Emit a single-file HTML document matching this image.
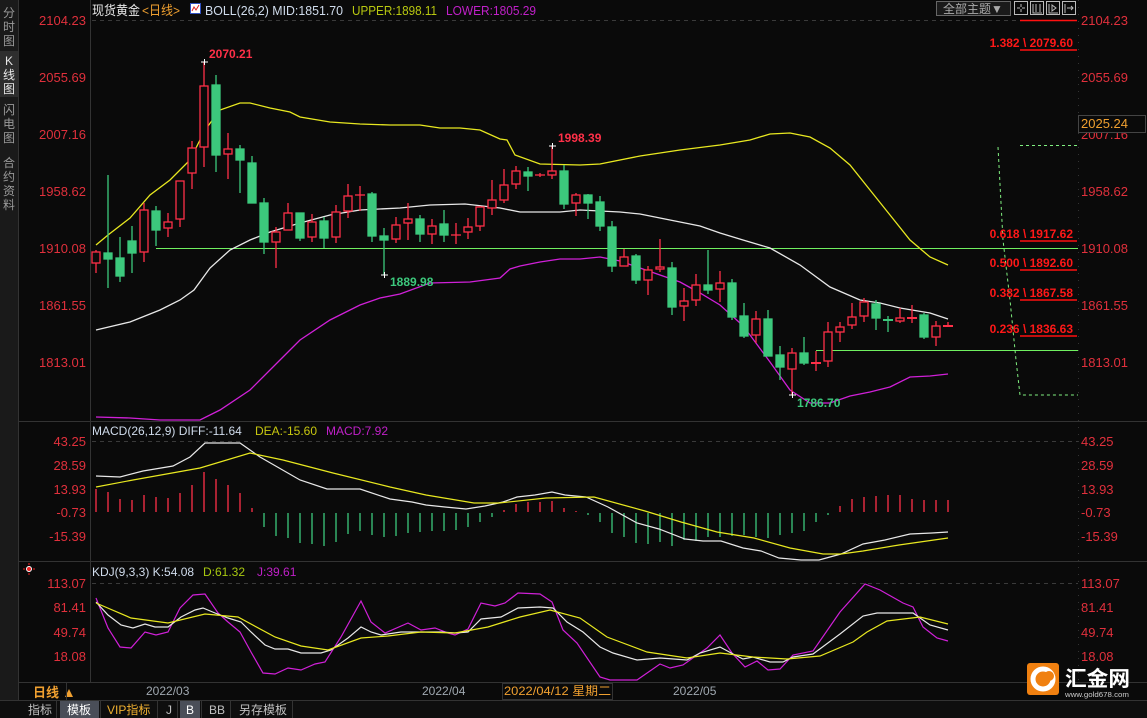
<!DOCTYPE html>
<html><head><meta charset="utf-8"><style>
*{margin:0;padding:0}
body{width:1147px;height:718px;background:#0a0a0a;overflow:hidden;font-family:"Liberation Sans","Noto Sans CJK SC",sans-serif}
svg{position:absolute;left:0;top:0}
</style></head><body>
<svg width="1147" height="718" viewBox="0 0 1147 718" xmlns="http://www.w3.org/2000/svg" font-family="Liberation Sans, Noto Sans CJK SC, sans-serif">
<rect width="1147" height="718" fill="#0a0a0a"/>
<rect x="0" y="0" width="18" height="700" fill="#1a1a1a"/>
<rect x="0" y="51" width="18" height="46" fill="#2e2e2e"/>
<line x1="18.5" y1="0" x2="18.5" y2="700" stroke="#333"/>
<g font-size="12" fill="#9a9a9a" text-anchor="middle">
<text x="9" y="17">分</text><text x="9" y="31">时</text><text x="9" y="45">图</text>
<text x="9" y="65" fill="#e8e8e8">K</text><text x="9" y="79" fill="#e8e8e8">线</text><text x="9" y="93" fill="#e8e8e8">图</text>
<text x="9" y="114">闪</text><text x="9" y="128">电</text><text x="9" y="142">图</text>
<text x="9" y="167">合</text><text x="9" y="181">约</text><text x="9" y="195">资</text><text x="9" y="209">料</text>
</g>
<g stroke="#333" stroke-width="1">
<line x1="90.5" y1="0" x2="90.5" y2="682"/>
<line x1="19" y1="421.5" x2="1147" y2="421.5"/>
<line x1="19" y1="561.5" x2="1147" y2="561.5"/>
<line x1="19" y1="682.5" x2="1147" y2="682.5"/>
<line x1="0" y1="700.5" x2="1147" y2="700.5"/>
<line x1="1078.5" y1="0" x2="1078.5" y2="682" stroke-dasharray="1,6"/>
</g>
<g stroke="#3a3a3a" stroke-dasharray="4,4">
<line x1="92" y1="20.5" x2="1020" y2="20.5"/>
<line x1="92" y1="441.5" x2="1078" y2="441.5"/>
<line x1="92" y1="583.5" x2="1078" y2="583.5"/>
</g>
<g font-size="13" fill="#e0303c">
<g text-anchor="end">
<text x="86" y="25">2104.23</text><text x="86" y="82">2055.69</text><text x="86" y="139">2007.16</text><text x="86" y="196">1958.62</text><text x="86" y="253">1910.08</text><text x="86" y="310">1861.55</text><text x="86" y="367">1813.01</text>
<text x="86" y="446">43.25</text><text x="86" y="470">28.59</text><text x="86" y="494">13.93</text><text x="86" y="517">-0.73</text><text x="86" y="541">-15.39</text>
<text x="86" y="588">113.07</text><text x="86" y="612">81.41</text><text x="86" y="637">49.74</text><text x="86" y="661">18.08</text>
</g>
<text x="1081" y="25">2104.23</text><text x="1081" y="82">2055.69</text><text x="1081" y="139">2007.16</text><text x="1081" y="196">1958.62</text><text x="1081" y="253">1910.08</text><text x="1081" y="310">1861.55</text><text x="1081" y="367">1813.01</text>
<text x="1081" y="446">43.25</text><text x="1081" y="470">28.59</text><text x="1081" y="494">13.93</text><text x="1081" y="517">-0.73</text><text x="1081" y="541">-15.39</text>
<text x="1081" y="588">113.07</text><text x="1081" y="612">81.41</text><text x="1081" y="637">49.74</text><text x="1081" y="661">18.08</text>
</g>
<rect x="1078.5" y="115.5" width="67" height="17" fill="#0a0a0a" stroke="#444"/>
<text x="1081" y="128" font-size="13" fill="#f0a030">2025.24</text>
<g font-size="13">
<text x="92" y="15" fill="#e8e8e8" textLength="48" lengthAdjust="spacingAndGlyphs">现货黄金</text>
<text x="142" y="15" fill="#f0a030" textLength="38" lengthAdjust="spacingAndGlyphs">&lt;日线&gt;</text>
<rect x="190.5" y="3.5" width="10" height="10" fill="#fff" stroke="#3050c0"/>
<polyline points="192,11 194,7 196,10 199,5" fill="none" stroke="#e02020"/>
<text x="205" y="15" fill="#d0dcec" textLength="138" lengthAdjust="spacingAndGlyphs">BOLL(26,2) MID:1851.70</text>
<text x="352" y="15" fill="#b8c810" textLength="85" lengthAdjust="spacingAndGlyphs">UPPER:1898.11</text>
<text x="446" y="15" fill="#c020c8" textLength="90" lengthAdjust="spacingAndGlyphs">LOWER:1805.29</text>
</g>
<g font-size="12">
<text x="92" y="435" fill="#d0dcec">MACD(26,12,9) DIFF:-11.64</text>
<text x="255" y="435" fill="#c8c810">DEA:-15.60</text>
<text x="326" y="435" fill="#c020c8">MACD:7.92</text>
<text x="92" y="576" fill="#d0dcec">KDJ(9,3,3) K:54.08</text>
<text x="203" y="576" fill="#a8c810">D:61.32</text>
<text x="257" y="576" fill="#c020c8">J:39.61</text>
</g>
<circle cx="29" cy="569" r="2.5" fill="#f02020" stroke="#fff"/>
<g stroke="#f02020"><line x1="23" y1="569" x2="25" y2="569"/><line x1="33" y1="569" x2="35" y2="569"/><line x1="29" y1="563" x2="29" y2="565"/><line x1="29" y1="573" x2="29" y2="575"/></g>
<rect x="936.5" y="1.5" width="74" height="14" fill="#1a1a1a" stroke="#666"/>
<text x="943" y="13" font-size="12" fill="#aaa">全部主题▼</text>
<g fill="none" stroke="#bbb">
<rect x="1014.5" y="1.5" width="13" height="13"/><rect x="1030.5" y="1.5" width="13" height="13"/><rect x="1046.5" y="1.5" width="13" height="13"/><rect x="1062.5" y="1.5" width="13" height="13"/>
<path d="M1021 4v3M1021 9v3M1017 8h3M1022 8h3M1033 4v9h9M1036 4v8M1040 4v8M1049 4v9h9M1052 5l4 3-4 3zM1065 4v9M1067 8h6M1071 6l2 2-2 2"/>
</g>
<line x1="156" y1="248.5" x2="1078" y2="248.5" stroke="#70f060"/>
<line x1="816" y1="350.5" x2="1078" y2="350.5" stroke="#70f060"/>
<g stroke="#80f080" fill="none" stroke-dasharray="3,3">
<polyline points="998,147 1003,240 1010,300 1016,360 1020,395 1078,395"/>
<line x1="1020" y1="145.5" x2="1078" y2="145.5"/>
</g>
<g stroke="#ff1010" stroke-width="1.5">
<line x1="1020" y1="20.5" x2="1077" y2="20.5"/>
<line x1="1020" y1="50" x2="1077" y2="50"/>
<line x1="1020" y1="241" x2="1077" y2="241"/>
<line x1="1020" y1="270" x2="1077" y2="270"/>
<line x1="1020" y1="300" x2="1077" y2="300"/>
<line x1="1020" y1="336" x2="1077" y2="336"/>
</g>
<g font-size="12" font-weight="bold" fill="#ff1818" text-anchor="end">
<text x="1073" y="47">1.382 \ 2079.60</text>
<text x="1073" y="238">0.618 \ 1917.62</text>
<text x="1073" y="267">0.500 \ 1892.60</text>
<text x="1073" y="297">0.382 \ 1867.58</text>
<text x="1073" y="333">0.236 \ 1836.63</text>
</g>
<g fill="none" stroke-width="1.3">
<polyline stroke="#e8e820" points="96,245 108,235 130,218 150,195 170,180 190,160 205,130 220,110 240,103 250,103 270,108 290,112 300,117 330,122 360,124 390,125 420,125 440,128 460,128 480,130 500,139 507,140 515,155 540,164 580,165 600,164 640,156 680,150 720,145 750,140 770,134 790,133 810,137 830,148 850,165 870,190 890,215 910,240 930,257 948,265"/>
<polyline stroke="#e8e8e8" points="96,330 130,322 160,310 180,300 194,290 210,268 230,250 250,240 270,232 300,223 330,215 360,210 400,208 430,205 465,204 500,208 520,212 560,212 580,210 600,211 620,212 640,214 670,220 700,226 720,233 743,240 770,248 800,265 830,287 860,300 880,303 900,308 930,313 948,319"/>
<polyline stroke="#d020d8" points="96,417 130,418 160,420 200,420 220,410 250,390 280,360 300,340 330,320 360,305 380,298 400,294 430,283 470,282 500,278 510,269 520,266 540,262 560,259 580,259 600,257 620,261 640,268 660,275 680,282 700,293 720,305 740,323 750,335 770,362 790,390 810,403 830,403 850,396 870,392 890,387 910,377 930,376 948,374"/>
</g>
<g stroke-width="1.3">
<g stroke="#ff3048" fill="#0a0a0a">
<line x1="96" y1="250" x2="96" y2="273"/><rect x="92" y="252" width="8" height="11"/>
<line x1="144" y1="203" x2="144" y2="262"/><rect x="140" y="210" width="8" height="42"/>
<line x1="168" y1="213" x2="168" y2="237"/><rect x="164" y="222" width="8" height="6"/>
<line x1="180" y1="181" x2="180" y2="227"/><rect x="176" y="181" width="8" height="38"/>
<line x1="192" y1="141" x2="192" y2="189"/><rect x="188" y="148" width="8" height="25"/>
<line x1="204" y1="62" x2="204" y2="167"/><rect x="200" y="86" width="8" height="61"/>
<line x1="228" y1="133" x2="228" y2="179"/><rect x="224" y="149" width="8" height="5"/>
<line x1="276" y1="227" x2="276" y2="268"/><rect x="272" y="232" width="8" height="10"/>
<line x1="288" y1="203" x2="288" y2="230"/><rect x="284" y="213" width="8" height="17"/>
<line x1="312" y1="214" x2="312" y2="242"/><rect x="308" y="222" width="8" height="15"/>
<line x1="336" y1="205" x2="336" y2="243"/><rect x="332" y="212" width="8" height="25"/>
<line x1="348" y1="184" x2="348" y2="218"/><rect x="344" y="196" width="8" height="15"/>
<line x1="360" y1="186" x2="360" y2="211"/><line x1="355" y1="195" x2="365" y2="195"/>
<line x1="396" y1="217" x2="396" y2="243"/><rect x="392" y="225" width="8" height="14"/>
<line x1="408" y1="203" x2="408" y2="240"/><rect x="404" y="219" width="8" height="4"/>
<line x1="432" y1="219" x2="432" y2="244"/><rect x="428" y="226" width="8" height="8"/>
<line x1="456" y1="223" x2="456" y2="244"/><line x1="451" y1="235" x2="461" y2="235"/>
<line x1="468" y1="218" x2="468" y2="239"/><rect x="464" y="227" width="8" height="5"/>
<line x1="480" y1="206" x2="480" y2="231"/><rect x="476" y="207" width="8" height="19"/>
<line x1="492" y1="180" x2="492" y2="215"/><rect x="488" y="200" width="8" height="8"/>
<line x1="504" y1="169" x2="504" y2="203"/><rect x="500" y="185" width="8" height="15"/>
<line x1="516" y1="166" x2="516" y2="189"/><rect x="512" y="171" width="8" height="13"/>
<line x1="540" y1="173" x2="540" y2="177"/><line x1="535" y1="175" x2="545" y2="175"/>
<line x1="552" y1="146" x2="552" y2="179"/><rect x="548" y="171" width="8" height="4"/>
<line x1="576" y1="193" x2="576" y2="216"/><rect x="572" y="195" width="8" height="8"/>
<line x1="624" y1="249" x2="624" y2="266"/><rect x="620" y="257" width="8" height="9"/>
<line x1="648" y1="266" x2="648" y2="295"/><rect x="644" y="270" width="8" height="10"/>
<line x1="660" y1="239" x2="660" y2="272"/><rect x="656" y="267" width="8" height="2"/>
<line x1="684" y1="288" x2="684" y2="321"/><rect x="680" y="301" width="8" height="5"/>
<line x1="696" y1="274" x2="696" y2="306"/><rect x="692" y="285" width="8" height="15"/>
<line x1="720" y1="271" x2="720" y2="302"/><rect x="716" y="283" width="8" height="6"/>
<line x1="756" y1="311" x2="756" y2="343"/><rect x="752" y="319" width="8" height="16"/>
<line x1="792" y1="348" x2="792" y2="395"/><rect x="788" y="353" width="8" height="16"/>
<line x1="816" y1="351" x2="816" y2="371"/><line x1="811" y1="363" x2="821" y2="363" stroke-width="2"/>
<line x1="828" y1="322" x2="828" y2="367"/><rect x="824" y="332" width="8" height="29"/>
<line x1="840" y1="322" x2="840" y2="342"/><rect x="836" y="327" width="8" height="5"/>
<line x1="852" y1="303" x2="852" y2="329"/><rect x="848" y="317" width="8" height="8"/>
<line x1="864" y1="298" x2="864" y2="322"/><rect x="860" y="302" width="8" height="14"/>
<line x1="900" y1="308" x2="900" y2="323"/><rect x="896" y="318" width="8" height="3"/>
<line x1="912" y1="305" x2="912" y2="323"/><line x1="907" y1="318" x2="917" y2="318" stroke-width="2"/>
<line x1="936" y1="321" x2="936" y2="346"/><rect x="932" y="326" width="8" height="11"/>
<line x1="948" y1="322" x2="948" y2="326"/><line x1="943" y1="326" x2="953" y2="326" stroke-width="2"/>
</g>
<g stroke="#3cc87c" fill="#3cc87c">
<line x1="108" y1="175" x2="108" y2="288"/><rect x="104" y="253" width="8" height="6"/>
<line x1="120" y1="237" x2="120" y2="282"/><rect x="116" y="258" width="8" height="18"/>
<line x1="132" y1="226" x2="132" y2="273"/><rect x="128" y="241" width="8" height="12"/>
<line x1="156" y1="206" x2="156" y2="246"/><rect x="152" y="211" width="8" height="19"/>
<line x1="216" y1="75" x2="216" y2="172"/><rect x="212" y="85" width="8" height="70"/>
<line x1="240" y1="145" x2="240" y2="193"/><rect x="236" y="149" width="8" height="11"/>
<line x1="252" y1="156" x2="252" y2="203"/><rect x="248" y="163" width="8" height="40"/>
<line x1="264" y1="198" x2="264" y2="254"/><rect x="260" y="203" width="8" height="39"/>
<line x1="300" y1="213" x2="300" y2="241"/><rect x="296" y="213" width="8" height="25"/>
<line x1="324" y1="217" x2="324" y2="248"/><rect x="320" y="221" width="8" height="17"/>
<line x1="372" y1="192" x2="372" y2="242"/><rect x="368" y="194" width="8" height="42"/>
<line x1="384" y1="228" x2="384" y2="275"/><rect x="380" y="236" width="8" height="4"/>
<line x1="420" y1="215" x2="420" y2="242"/><rect x="416" y="219" width="8" height="15"/>
<line x1="444" y1="210" x2="444" y2="242"/><rect x="440" y="224" width="8" height="11"/>
<line x1="528" y1="167" x2="528" y2="191"/><rect x="524" y="172" width="8" height="4"/>
<line x1="564" y1="165" x2="564" y2="209"/><rect x="560" y="171" width="8" height="33"/>
<line x1="588" y1="194" x2="588" y2="219"/><rect x="584" y="195" width="8" height="8"/>
<line x1="600" y1="196" x2="600" y2="231"/><rect x="596" y="202" width="8" height="24"/>
<line x1="612" y1="221" x2="612" y2="272"/><rect x="608" y="227" width="8" height="39"/>
<line x1="636" y1="254" x2="636" y2="284"/><rect x="632" y="256" width="8" height="24"/>
<line x1="672" y1="262" x2="672" y2="315"/><rect x="668" y="268" width="8" height="39"/>
<line x1="708" y1="250" x2="708" y2="294"/><rect x="704" y="285" width="8" height="5"/>
<line x1="732" y1="279" x2="732" y2="320"/><rect x="728" y="283" width="8" height="34"/>
<line x1="744" y1="303" x2="744" y2="338"/><rect x="740" y="316" width="8" height="20"/>
<line x1="768" y1="310" x2="768" y2="356"/><rect x="764" y="319" width="8" height="37"/>
<line x1="780" y1="346" x2="780" y2="380"/><rect x="776" y="355" width="8" height="12"/>
<line x1="804" y1="337" x2="804" y2="365"/><rect x="800" y="353" width="8" height="10"/>
<line x1="876" y1="300" x2="876" y2="330"/><rect x="872" y="304" width="8" height="14"/>
<line x1="888" y1="316" x2="888" y2="332"/><line x1="883" y1="320" x2="893" y2="320" stroke-width="2"/>
<line x1="924" y1="313" x2="924" y2="339"/><rect x="920" y="315" width="8" height="22"/>
</g>
</g>
<g stroke="#fff"><path d="M201 62h7M204.5 59v6M549 146h7M552.5 143v6M381 275h7M384.5 272v6M789 395h7M792.5 392v6"/></g>
<g font-size="12" font-weight="bold">
<text x="209" y="58" fill="#ff3048">2070.21</text>
<text x="558" y="142" fill="#ff3048">1998.39</text>
<text x="390" y="286" fill="#3cc87c">1889.98</text>
<text x="797" y="407" fill="#3cc87c">1786.70</text>
</g>
<g stroke-width="1.3">
<path stroke="#ff3048" d="M96 512V489M108 512V492M120 512V499M132 512V500M144 512V495M156 512V497M168 512V498M180 512V493M192 512V485M204 512V472M216 512V479M228 512V485M240 512V493M252 512V508M504 512V510M516 512V504M528 512V502M540 512V502M552 512V501M564 512V508M576 512V511M840 512V506M852 512V499M864 512V497M876 512V496M888 512V495M900 512V495M912 512V499M924 512V500M936 512V500M948 512V500"/>
<path stroke="#3cc87c" d="M264 513V527M276 513V536M288 513V538M300 513V543M312 513V544M324 513V546M336 513V542M348 513V534M360 513V531M372 513V535M384 513V537M396 513V536M408 513V533M420 513V532M432 513V531M444 513V531M456 513V530M468 513V527M480 513V522M492 513V517M588 513V515M600 513V522M612 513V533M624 513V537M636 513V543M648 513V544M660 513V542M672 513V546M684 513V540M696 513V541M708 513V537M720 513V537M732 513V536M744 513V535M756 513V537M768 513V538M780 513V535M792 513V533M804 513V531M816 513V522M828 513V515"/>
</g>
<g fill="none" stroke-width="1.2">
<polyline stroke="#e8e8e8" points="96,476 120,477 143,471 173,466 190,457 205,443 240,443 260,457 300,480 327,489 360,489 390,499 412,502 426,505 445,507 466,509 485,506 503,502 517,497 535,495 552,492 565,495 586,497 608,507 637,523 659,529 685,539 703,541 721,541 743,548 761,551 779,558 801,560 819,560 841,554 863,544 885,540 910,534 932,533 948,532"/>
<polyline stroke="#e8e820" points="96,487 133,480 200,468 250,453 283,460 333,473 390,487 426,495 474,503 499,503 546,498 594,497 645,511 681,522 717,532 754,538 790,548 823,554 841,554 863,551 899,545 948,538"/>
</g>
<g fill="none" stroke-width="1.2">
<polyline stroke="#d020d8" points="96,598 108,628 120,647 131,648 145,632 156,635 168,632 180,608 193,595 205,594 218,613 228,622 240,632 251,652 263,673 275,674 288,668 301,670 315,664 325,662 341,637 361,601 371,622 385,633 408,623 421,630 435,628 448,633 455,635 468,629 481,603 495,606 505,603 518,593 540,594 552,602 563,630 577,643 600,677 610,680 637,680 660,664 670,668 683,665 707,648 720,635 732,653 745,667 757,661 768,670 780,669 793,655 813,651 840,612 865,584 880,590 903,603 913,607 923,627 937,638 948,641"/>
<polyline stroke="#e8e8e8" points="96,602 108,615 121,625 133,628 145,624 155,627 168,627 181,617 195,610 203,608 215,613 228,618 241,622 251,632 265,645 275,649 288,649 301,653 321,653 331,650 348,638 361,627 371,632 381,635 401,632 421,632 441,632 455,633 468,632 481,619 501,617 518,608 540,607 553,608 567,622 583,632 600,647 613,653 637,660 660,658 687,660 700,653 720,647 733,654 743,659 753,657 770,662 783,662 793,657 813,654 840,634 863,616 877,613 913,613 930,625 948,630"/>
<polyline stroke="#e8e820" points="96,603 131,618 168,623 205,614 238,617 275,637 301,646 328,650 361,638 388,636 421,632 455,633 488,627 520,617 550,610 580,618 607,637 647,652 687,658 720,653 753,657 787,659 820,656 853,642 867,632 887,621 920,617 948,624"/>
</g>
<g font-size="12">
<text x="33" y="697" fill="#f0a030" font-weight="bold" font-size="13">日线</text>
<path d="M65 697 l4 -8 4 8z" fill="#f0a030"/>
<text x="146" y="695" fill="#a0a8b0">2022/03</text>
<text x="422" y="695" fill="#a0a8b0">2022/04</text>
<rect x="502.5" y="683.5" width="110" height="16" fill="#0a0a0a" stroke="#333"/>
<text x="504" y="695" fill="#f0a030" textLength="107" lengthAdjust="spacingAndGlyphs">2022/04/12 星期二</text>
<text x="673" y="695" fill="#a0a8b0">2022/05</text>
</g>
<line x1="66.5" y1="683" x2="66.5" y2="700" stroke="#333"/>
<rect x="0" y="701" width="1147" height="17" fill="#0e0e0e"/>
<rect x="60" y="701" width="39" height="17" fill="#4a4e58"/>
<rect x="180" y="701" width="20" height="17" fill="#4a4e58"/>
<g font-size="12">
<text x="28" y="714" fill="#c0c0c0">指标</text>
<text x="67" y="714" fill="#fff">模板</text>
<text x="107" y="714" fill="#f0b030">VIP指标</text>
<text x="166" y="714" fill="#c0c0c0">J</text>
<text x="186" y="714" fill="#fff">B</text>
<text x="209" y="714" fill="#c0c0c0">BB</text>
<text x="239" y="714" fill="#c0c0c0">另存模板</text>
</g>
<g stroke="#333"><path d="M56.5 701v17M100.5 701v17M157.5 701v17M177.5 701v17M201.5 701v17M230.5 701v17M292.5 701v17"/></g>
<rect x="1027" y="663" width="32" height="32" rx="3" fill="#f08010"/>
<circle cx="1043" cy="679" r="10" fill="none" stroke="#fff" stroke-width="5"/>
<circle cx="1049" cy="676" r="5" fill="#f08010"/>
<text x="1065" y="686" font-size="21" fill="#fff" font-weight="bold" textLength="65" lengthAdjust="spacingAndGlyphs">汇金网</text>
<text x="1065" y="697" font-size="7" fill="#ccc" textLength="64" lengthAdjust="spacingAndGlyphs">www.gold678.com</text>
</svg>
</body></html>
